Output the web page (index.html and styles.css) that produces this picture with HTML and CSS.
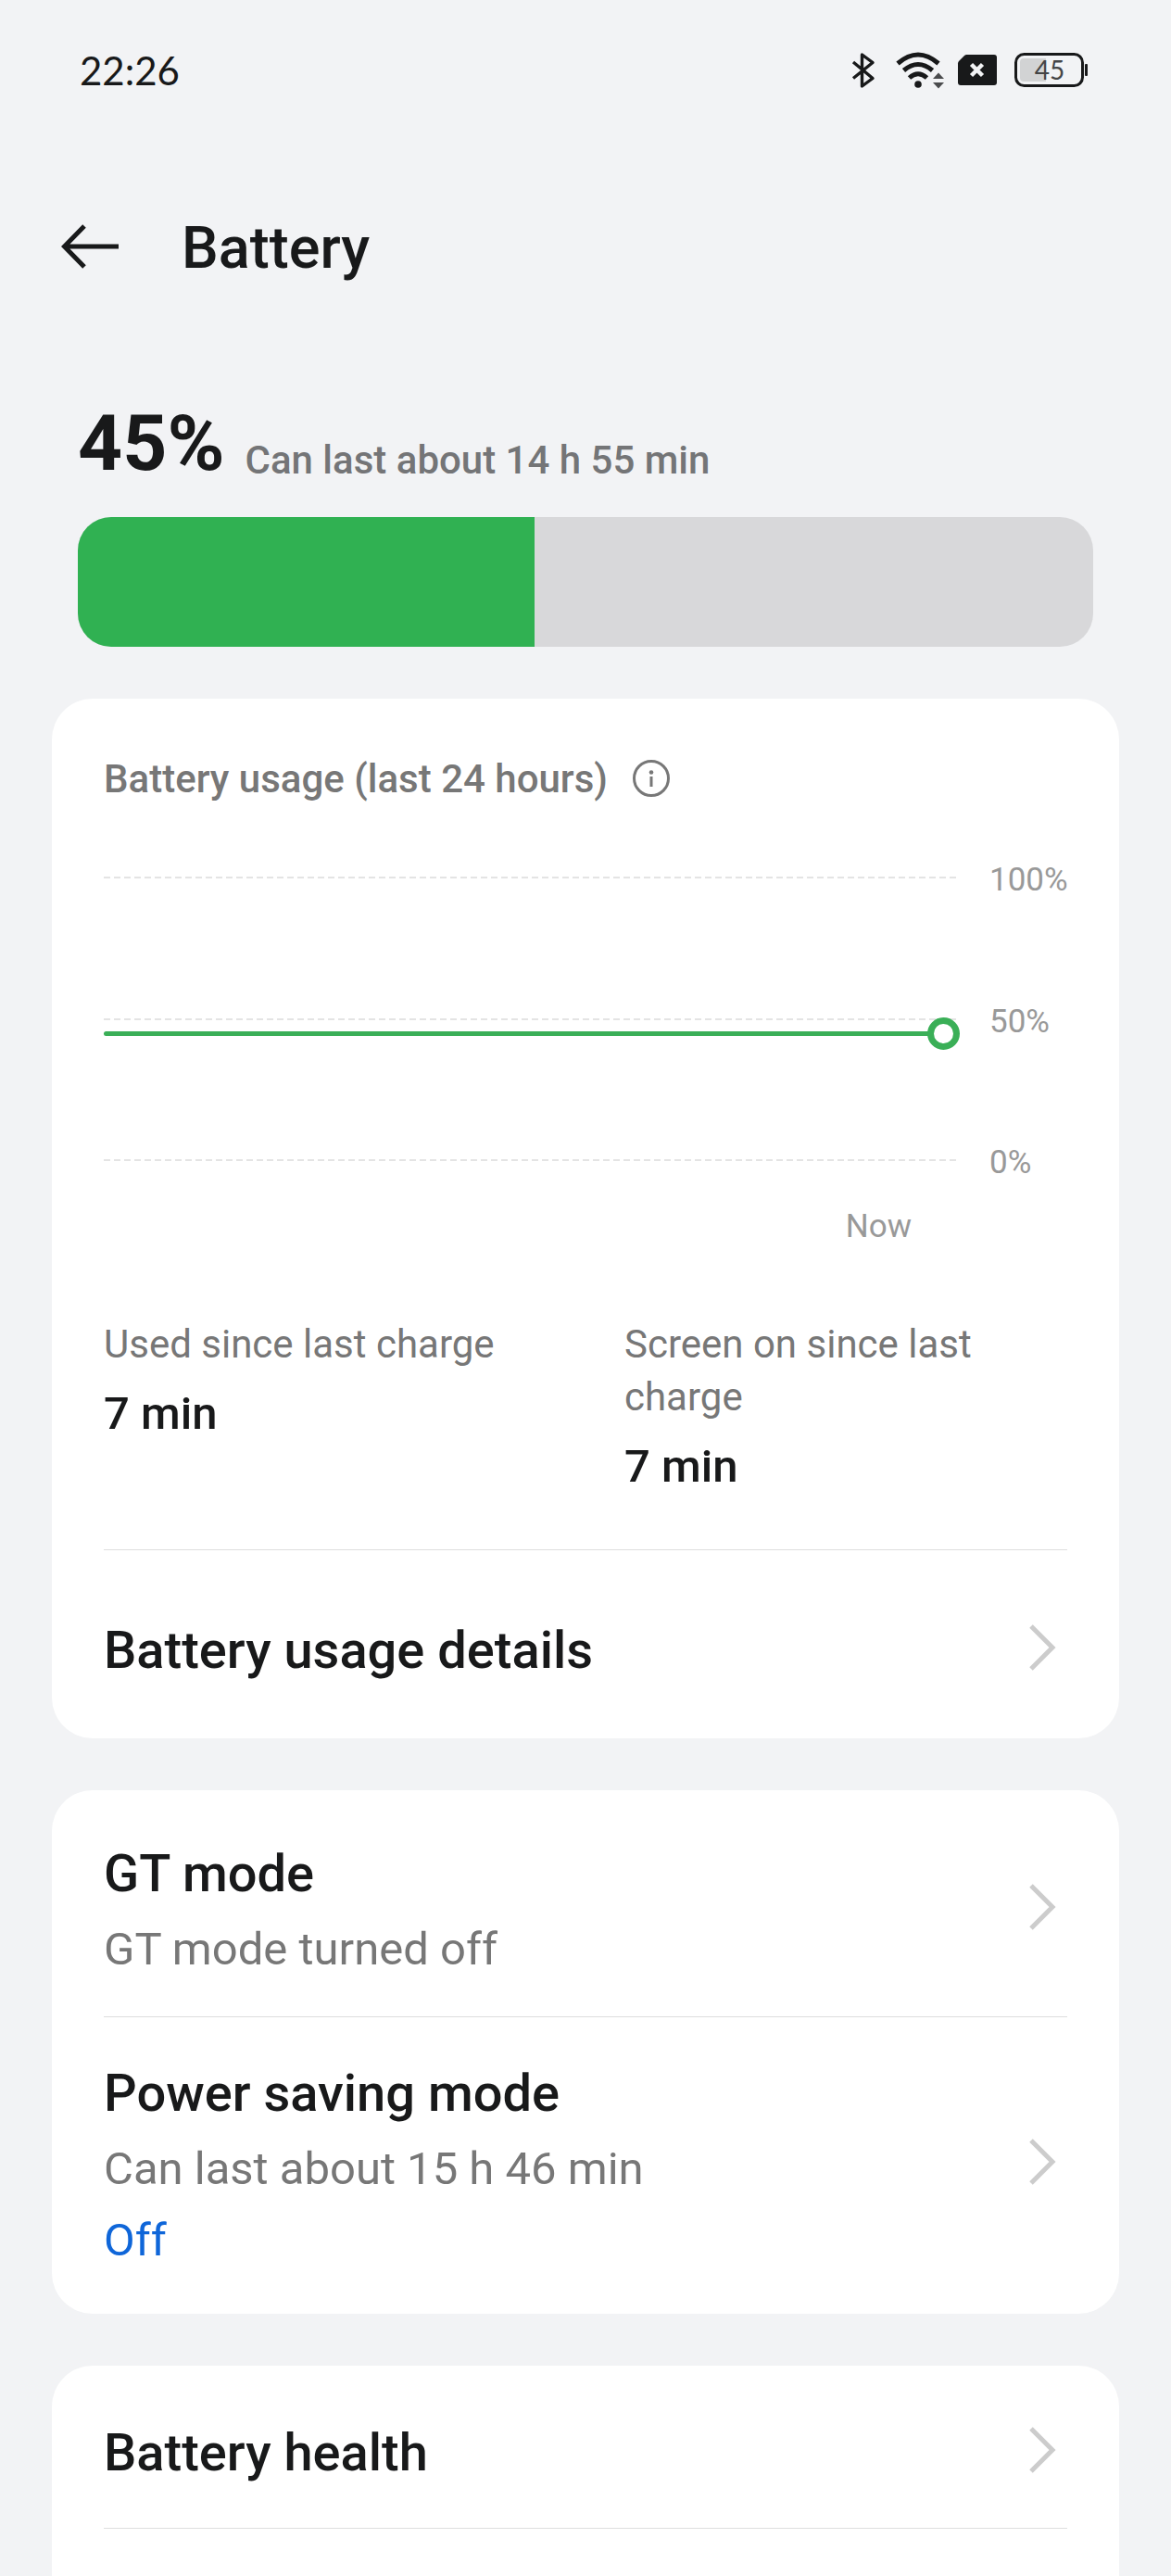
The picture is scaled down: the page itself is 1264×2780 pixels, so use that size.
FILE: index.html
```
<!DOCTYPE html>
<html lang="en">
<head>
    <meta charset="UTF-8">
    <meta name="viewport" content="width=device-width, initial-scale=1.0">
    <title>Battery</title>
    <link rel="stylesheet" href="styles.css">
</head>
<body>
    <!-- Status bar -->
    <div class="status-bar">
        <span class="time">22:26</span>
        <div class="status-icons">
            <svg class="icon-bluetooth" width="26" height="40" viewBox="0 0 26 40" fill="none" stroke="#18191a" stroke-width="3.4" stroke-linejoin="round">
                <path d="M2 11 L23 28.5 L11.5 37 V3 L23 11.500 L2 28.500"/>
            </svg>
            <svg class="icon-wifi" width="52" height="40" viewBox="0 0 52 40" fill="none" stroke="#18191a" stroke-width="5">
                <path d="M2 12.500 Q24 -6.500 46 12.500"/>
                <path d="M8.500 20 Q24 7 39.500 20"/>
                <path d="M14.500 28 Q24 19.500 33.500 28"/>
                <circle cx="24" cy="35" r="3.800" fill="#18191a" stroke="none"/>
                <path d="M40 29 L46 22.500 L52 29 Z M40 33 H52 L46 39.500 Z" fill="#4a4b4d" stroke="none"/>
            </svg>
            <svg class="icon-sim" width="44" height="36" viewBox="0 0 44 36">
                <path d="M10.500 1 H40 Q43 1 43 4 V31 Q43 34 40 34 H4 Q1 34 1 31 V10.500 Q1 9 2 8 L8 2 Q9 1 10.500 1 Z" fill="#18191a"/>
                <path d="M15.500 11.500 L27.500 23.500 M27.500 11.500 L15.500 23.500" stroke="#f2f3f5" stroke-width="4.500"/>
            </svg>
            <svg class="icon-battery" width="79" height="38" viewBox="0 0 79 38">
                <rect x="1.500" y="1.500" width="72" height="34" rx="9" fill="none" stroke="#18191a" stroke-width="3"/>
                <path d="M10 6 H34 V31 H10 Q6 31 6 27 V10 Q6 6 10 6 Z" fill="#d2d3d4"/>
                <rect x="76" y="12" width="3" height="13" rx="1" fill="#18191a"/>
                <text x="38" y="29" text-anchor="middle">45</text>
            </svg>
        </div>
    </div>

    <header class="top-bar">
        <button class="back-btn" aria-label="Back">
            <svg width="62" height="54" viewBox="0 0 62 54" fill="none" stroke="#18191a" stroke-width="5">
                <path d="M62 25 H4 M25 3 L3.500 25 L25 47"/>
            </svg>
        </button>
        <h1>Battery</h1>
    </header>

    <!-- Charge level -->
    <section class="level">
        <div class="level-text">
            <span class="percent">45%</span>
            <span class="remaining">Can last about 14 h 55 min</span>
        </div>
        <div class="level-bar">
            <div class="level-fill" style="width: 45%"></div>
        </div>
    </section>

    <main class="cards">
        <section class="card">
            <div class="usage">
                <div class="usage-title">
                    <h2>Battery usage (last 24 hours)</h2>
                    <button class="info-btn" aria-label="About battery usage">
                        <svg width="42" height="42" viewBox="0 0 42 42">
                            <circle cx="21" cy="20" r="18.500" fill="none" stroke="#777" stroke-width="3"/>
                            <circle cx="21" cy="13.500" r="2.300" fill="#777"/>
                            <path d="M21 18 V29" stroke="#777" stroke-width="3"/>
                        </svg>
                    </button>
                </div>

                <div class="chart">
                    <div class="plot">
                        <div class="grid-line"></div>
                        <div class="grid-line"></div>
                        <div class="grid-line"></div>
                        <div class="usage-line" style="bottom: 45%"></div>
                    </div>
                    <div class="scale">
                        <span>100%</span>
                        <span>50%</span>
                        <span>0%</span>
                    </div>
                    <div class="now">Now</div>
                </div>

                <dl class="stats">
                    <div>
                        <dt>Used since last charge</dt>
                        <dd>7 min</dd>
                    </div>
                    <div>
                        <dt>Screen on since last charge</dt>
                        <dd>7 min</dd>
                    </div>
                </dl>
            </div>

            <a href="#" class="row row-details">
                <span class="row-text"><span class="row-title">Battery usage details</span></span>
                <svg class="chevron" viewBox="0 0 30 60"><path d="M3 4 L26 27 L3 50"/></svg>
            </a>
        </section>

        <section class="card">
            <a href="#" class="row row-gt">
                <span class="row-text">
                    <span class="row-title">GT mode</span>
                    <span class="row-sub">GT mode turned off</span>
                </span>
                <svg class="chevron" viewBox="0 0 30 60"><path d="M3 4 L26 27 L3 50"/></svg>
            </a>
            <a href="#" class="row row-saving">
                <span class="row-text">
                    <span class="row-title">Power saving mode</span>
                    <span class="row-sub">Can last about 15 h 46 min</span>
                    <span class="row-sub row-state">Off</span>
                </span>
                <svg class="chevron" viewBox="0 0 30 60"><path d="M3 4 L26 27 L3 50"/></svg>
            </a>
        </section>

        <section class="card card-last">
            <a href="#" class="row row-health">
                <span class="row-text"><span class="row-title">Battery health</span></span>
                <svg class="chevron" viewBox="0 0 30 60"><path d="M3 4 L26 27 L3 50"/></svg>
            </a>
        </section>
    </main>
</body>
</html>
```
FILE: styles.css
```
*, *::after {
    box-sizing: border-box;
}

body {
    margin: 0;
    background-color: #f2f3f5;
    color: #18191a;
    font-family: Roboto, "Liberation Sans", sans-serif;
    display: flex;
    flex-direction: column;
    min-height: 100vh;
}

h1, h2, dl, dd {
    margin: 0;
}

button {
    padding: 0;
    border: none;
    background: none;
    cursor: pointer;
}

svg {
    display: block;
    flex-shrink: 0;
}

/* status bar */
.status-bar {
    display: flex;
    justify-content: space-between;
    align-items: center;
    padding: 51px 90px 0 86px;
}

.time {
    font-family: Lato, sans-serif;
    font-size: 42px;
    line-height: 50px;
}

.status-icons {
    display: flex;
    align-items: center;
}

.icon-wifi {
    margin-left: 22px;
}

.icon-sim {
    margin-left: 14px;
}

.icon-battery {
    margin-left: 18px;
}

.icon-battery text {
    font-family: Lato, sans-serif;
    font-size: 28px;
    fill: #444546;
}

/* title */
.top-bar {
    display: flex;
    align-items: center;
    gap: 68px;
    padding: 130px 66px 0;
}

.top-bar h1 {
    font-size: 63px;
    line-height: 74px;
    font-weight: 500;
}

/* charge level */
.level {
    padding: 125px 84px 56px;
}

.level-text {
    display: flex;
    align-items: flex-end;
    gap: 22px;
}

.percent {
    font-size: 84px;
    line-height: 98px;
    font-weight: 700;
}

.remaining {
    font-size: 42px;
    line-height: 63px;
    font-weight: 500;
    color: #747577;
}

.level-bar {
    height: 140px;
    margin-top: 30px;
    border-radius: 36px;
    background-color: #d8d8da;
    overflow: hidden;
}

.level-fill {
    height: 100%;
    background-color: #30b152;
}

/* cards */
.cards {
    display: flex;
    flex-direction: column;
    flex-grow: 1;
    gap: 56px;
    padding: 0 56px;
}

.card {
    padding: 0 56px;
    border-radius: 44px;
    background-color: #fff;
}

.card-last {
    flex-grow: 1;
    padding-bottom: 50px;
    border-radius: 44px 44px 0 0;
}

.usage {
    padding: 62px 0 61px;
    border-bottom: 1px solid #dedede;
}

.usage-title {
    display: flex;
    align-items: center;
    gap: 26px;
}

.usage-title h2 {
    font-size: 42px;
    line-height: 49px;
    font-weight: 500;
    color: #777;
}

/* chart */
.chart {
    display: grid;
    grid-template-columns: 1fr 84px;
    column-gap: 36px;
    margin-top: 64px;
    font-size: 35px;
    line-height: 41px;
    color: #999;
}

.plot {
    position: relative;
    display: flex;
    flex-direction: column;
    justify-content: space-between;
    margin: 17px 0 22px;
}

.grid-line {
    height: 2px;
    background: repeating-linear-gradient(to right, #e4e4e4 0 7px, #fff 7px 11px);
}

.usage-line {
    position: absolute;
    left: 0;
    right: 14px;
    height: 5px;
    margin-bottom: -3px;
    border-radius: 3px;
    background-color: #3aaf57;
}

.usage-line::after {
    content: "";
    position: absolute;
    right: -18px;
    top: -15px;
    width: 35px;
    height: 35px;
    border: 7px solid #3aaf57;
    border-radius: 50%;
    background-color: #fff;
}

.scale {
    display: flex;
    flex-direction: column;
    justify-content: space-between;
    height: 346px;
}

.now {
    margin-top: 28px;
    padding-right: 48px;
    text-align: right;
}

.stats {
    display: grid;
    grid-template-columns: 1fr 1fr;
    column-gap: 84px;
    margin-top: 78px;
}

.stats dt {
    font-size: 42px;
    line-height: 57px;
    color: #777;
}

.stats dd {
    margin-top: 18px;
    font-size: 49px;
    line-height: 57px;
    font-weight: 500;
}

/* setting rows */
.row {
    display: flex;
    justify-content: space-between;
    align-items: center;
    padding-right: 10px;
    color: inherit;
    text-decoration: none;
}

.row-details {
    padding-top: 75px;
    padding-bottom: 62px;
}

.row-gt {
    padding-top: 57px;
    padding-bottom: 44px;
    border-bottom: 1px solid #dedede;
}

.row-saving {
    padding-top: 49px;
    padding-bottom: 51px;
}

.row-health {
    padding-top: 61px;
    padding-bottom: 48px;
    border-bottom: 1px solid #dedede;
}

.row-text {
    display: flex;
    flex-direction: column;
    gap: 20px;
}

.row-title {
    font-size: 56px;
    line-height: 66px;
    font-weight: 500;
}

.row-sub {
    font-size: 49px;
    line-height: 57px;
    color: #777;
}

.row-state {
    color: #0f66d9;
}

.chevron {
    width: 34px;
    height: 60px;
    fill: none;
    stroke: #ccc;
    stroke-width: 5;
}
```
